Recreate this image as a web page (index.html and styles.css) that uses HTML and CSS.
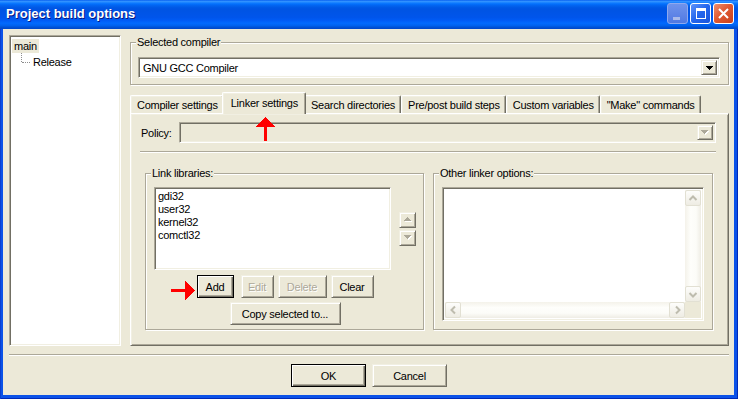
FILE: index.html
```html
<!DOCTYPE html>
<html>
<head>
<meta charset="utf-8">
<title>Project build options</title>
<link rel="stylesheet" href="styles.css">
</head>
<body>
<div class="window">
  <div class="titlebar">
    <span class="title">Project build options</span>
    <div class="caption-buttons">
      <div class="cbtn cbtn-min"><span class="min-bar"></span></div>
      <div class="cbtn cbtn-max">
        <svg width="19" height="19" viewBox="0 0 19 19"><path d="M5 4h10v11H5z M6 7v7h8V7z" fill="#fff" fill-rule="evenodd"/></svg>
      </div>
      <div class="cbtn cbtn-close">
        <svg width="19" height="19" viewBox="0 0 19 19"><path d="M5 5L14 14M14 5L5 14" stroke="#fff" stroke-width="2" fill="none"/></svg>
      </div>
    </div>
  </div>
  <div class="client">
    <div class="main">
      <div class="tree sunken">
        <div class="tree-row"><span class="tree-sel">main</span></div>
        <div class="tree-row tree-child">Release</div>
      </div>
      <div class="right">
        <div class="group group-compiler">
          <span class="group-title">Selected compiler</span>
          <div class="combo sunken">
            <span class="combo-text">GNU GCC Compiler</span>
            <span class="combo-btn raised">
              <svg width="7" height="4" viewBox="0 0 7 4" shape-rendering="crispEdges"><path d="M0 0h7v1H0z M1 1h5v1H1z M2 2h3v1H2z M3 3h1v1H3z" fill="#000"/></svg>
            </span>
          </div>
        </div>
        <div class="tabs">
          <div class="tab">Compiler settings</div>
          <div class="tab tab-active">Linker settings</div>
          <div class="tab">Search directories</div>
          <div class="tab">Pre/post build steps</div>
          <div class="tab">Custom variables</div>
          <div class="tab">"Make" commands</div>
        </div>
        <div class="tab-panel">
          <div class="policy-row">
            <span class="policy-label">Policy:</span>
            <div class="combo combo-disabled sunken">
              <span class="combo-text"></span>
              <span class="combo-btn raised">
                <svg width="8" height="5" viewBox="0 0 8 5" shape-rendering="crispEdges"><path d="M1 1h7v1H1z M2 2h5v1H2z M3 3h3v1H3z M4 4h1v1H4z" fill="#fff"/><path d="M0 0h7v1H0z M1 1h5v1H1z M2 2h3v1H2z M3 3h1v1H3z" fill="#ACA899"/></svg>
              </span>
            </div>
          </div>
          <div class="hsep"></div>
          <div class="groups">
            <div class="group group-libs">
              <span class="group-title">Link libraries:</span>
              <div class="libs-row">
                <div class="listbox sunken">
                  <div class="list-item">gdi32</div>
                  <div class="list-item">user32</div>
                  <div class="list-item">kernel32</div>
                  <div class="list-item">comctl32</div>
                </div>
                <div class="updown">
                  <div class="small-btn raised">
                    <svg width="8" height="5" viewBox="0 0 8 5" shape-rendering="crispEdges"><path d="M4 1h1v1H4z M3 2h3v1H3z M2 3h5v1H2z M1 4h7v1H1z" fill="#fff"/><path d="M3 0h1v1H3z M2 1h3v1H2z M1 2h5v1H1z M0 3h7v1H0z" fill="#ACA899"/></svg>
                  </div>
                  <div class="small-btn raised">
                    <svg width="8" height="5" viewBox="0 0 8 5" shape-rendering="crispEdges"><path d="M1 1h7v1H1z M2 2h5v1H2z M3 3h3v1H3z M4 4h1v1H4z" fill="#fff"/><path d="M0 0h7v1H0z M1 1h5v1H1z M2 2h3v1H2z M3 3h1v1H3z" fill="#ACA899"/></svg>
                  </div>
                </div>
              </div>
              <div class="btn-row">
                <button class="btn btn-default btn-add">Add</button>
                <button class="btn btn-disabled btn-edit">Edit</button>
                <button class="btn btn-disabled btn-delete">Delete</button>
                <button class="btn btn-clear">Clear</button>
              </div>
              <div class="btn-row btn-row-copy">
                <button class="btn btn-copy">Copy selected to...</button>
              </div>
              <svg class="arrow-right" width="24" height="19" viewBox="0 0 24 19" shape-rendering="crispEdges"><rect x="0" y="8" width="15" height="3" fill="#f00"/><polygon points="14,0 24,9.5 14,19" fill="#f00"/></svg>
            </div>
            <div class="group group-other">
              <span class="group-title">Other linker options:</span>
              <div class="textarea sunken">
                <div class="ta-content"></div>
                <div class="vscroll">
                  <div class="sb-btn"><svg width="14" height="13" viewBox="0 0 14 13"><path d="M3.5 8L7 4.5L10.5 8" stroke="#BEBCAE" stroke-width="2" fill="none"/></svg></div>
                  <div class="sb-track"></div>
                  <div class="sb-btn"><svg width="14" height="13" viewBox="0 0 14 13"><path d="M3.5 5L7 8.5L10.5 5" stroke="#BEBCAE" stroke-width="2" fill="none"/></svg></div>
                </div>
                <div class="hscroll">
                  <div class="sb-btn"><svg width="13" height="14" viewBox="0 0 13 14"><path d="M8 3.5L4.5 7L8 10.5" stroke="#BEBCAE" stroke-width="2" fill="none"/></svg></div>
                  <div class="sb-track"></div>
                  <div class="sb-btn"><svg width="13" height="14" viewBox="0 0 13 14"><path d="M5 3.5L8.5 7L5 10.5" stroke="#BEBCAE" stroke-width="2" fill="none"/></svg></div>
                </div>
                <div class="sb-corner"></div>
              </div>
            </div>
          </div>
          <svg class="arrow-up" width="19" height="25" viewBox="0 0 19 25" shape-rendering="crispEdges"><polygon points="9.5,0 19,10 0,10" fill="#f00"/><rect x="8" y="9" width="3" height="15" fill="#f00"/></svg>
        </div>
      </div>
    </div>
    <div class="sep"></div>
    <div class="dialog-buttons">
      <button class="btn btn-default btn-dlg">OK</button>
      <button class="btn btn-dlg">Cancel</button>
    </div>
  </div>
</div>
</body>
</html>
```

FILE: styles.css
```css
* { box-sizing: border-box; }
html, body { margin: 0; padding: 0; }
body {
  width: 738px;
  height: 399px;
  overflow: hidden;
  font-family: "Liberation Sans", Arial, sans-serif;
  font-size: 11px;
  letter-spacing: -0.25px;
  color: #000;
  background: #0A4EE4;
}

.window {
  width: 738px;
  height: 399px;
  display: flex;
  flex-direction: column;
  background: #0B52E8;
  box-shadow: inset 1px 0 #0A3FD0, inset -1px 0 #0029B8, inset 0 -1px #0029B8;
}

/* ---------- title bar ---------- */
.titlebar {
  height: 29px;
  flex: none;
  display: flex;
  align-items: flex-start;
  padding: 0 4px 0 6px;
  background: linear-gradient(to bottom,
    #0058ee 0%, #3593ff 4%, #288eff 7%, #127dff 10%, #036ffc 14%,
    #0262ee 20%, #0057e5 27%, #0054e3 33%, #0055eb 60%, #005bf5 70%,
    #026afe 80%, #0062ef 88%, #0052d6 94%, #0046c8 100%);
}
.title {
  flex: 1;
  color: #fff;
  font-weight: bold;
  font-size: 13px;
  letter-spacing: 0;
  line-height: 16px;
  margin-top: 6px;
  text-shadow: 1px 1px #0A1883;
  white-space: nowrap;
}
.caption-buttons {
  display: flex;
  gap: 2px;
  margin-top: 3px;
}
.cbtn {
  width: 21px;
  height: 21px;
  border-radius: 3px;
  border: 1px solid #fff;
  display: flex;
  align-items: center;
  justify-content: center;
  position: relative;
}
.cbtn-min {
  border-color: #8FA9EE;
  background: linear-gradient(to bottom, #6F93EC, #5179E2);
}
.min-bar {
  position: absolute;
  left: 5px;
  top: 13px;
  width: 7px;
  height: 3px;
  background: #A9BAEA;
}
.cbtn-max {
  background: linear-gradient(135deg, #5D93FA, #2466EC 50%, #1A55DC);
}
.cbtn-close {
  background: linear-gradient(135deg, #EE8F6F, #E05A33 45%, #C9401C);
}

/* ---------- client area ---------- */
.client {
  flex: 1;
  margin: 0 4px 4px 3px;
  background: #ECE9D8;
  padding: 6px 5px 8px 6px;
  display: flex;
  flex-direction: column;
}
.main {
  display: flex;
  gap: 9px;
  height: 311px;
  flex: none;
}

.sunken {
  border: 1px solid;
  border-color: #ACA899 #fff #fff #ACA899;
  box-shadow: inset 1px 1px #716F64, inset -1px -1px #F1EFE2;
}
.raised {
  border: 1px solid;
  border-color: #F1EFE2 #716F64 #716F64 #F1EFE2;
  box-shadow: inset 1px 1px #fff, inset -1px -1px #ACA899;
  background: #ECE9D8;
}

/* tree */
.tree {
  width: 112px;
  flex: none;
  background: #fff;
  padding: 2px 2px;
}
.tree-row {
  height: 16px;
  display: flex;
  align-items: center;
  white-space: nowrap;
}
.tree-sel {
  background: #ECE9D8;
  line-height: 14px;
  padding: 0 2px;
}
.tree-child {
  position: relative;
  padding-left: 21px;
}
.tree-child::before {
  content: "";
  position: absolute;
  left: 9px;
  top: -1px;
  height: 9px;
  border-left: 1px dotted #8E8E8E;
}
.tree-child::after {
  content: "";
  position: absolute;
  left: 10px;
  top: 8px;
  width: 8px;
  border-top: 1px dotted #8E8E8E;
}

/* right column */
.right {
  flex: 1;
  display: flex;
  flex-direction: column;
  min-width: 0;
}

.group {
  position: relative;
  border: 1px solid #ACA899;
  box-shadow: inset 1px 1px #fff, 1px 1px #fff;
}
.group-title {
  position: absolute;
  top: -7px;
  left: 5px;
  padding: 0 1px;
  line-height: 13px;
  background: #ECE9D8;
  white-space: nowrap;
}
.group-compiler {
  margin-top: 7px;
  padding: 14px 8px 6px 7px;
}

.combo {
  height: 21px;
  display: flex;
  align-items: stretch;
  background: #fff;
  padding: 2px;
}
.combo-text {
  flex: 1;
  display: flex;
  align-items: center;
  padding-left: 2px;
  white-space: nowrap;
}
.combo-btn {
  width: 16px;
  flex: none;
  display: flex;
  align-items: center;
  justify-content: center;
}
.combo-disabled {
  background: #ECE9D8;
}

/* tabs */
.tabs {
  display: flex;
  align-items: flex-end;
  height: 21px;
  margin-top: 7px;
  flex: none;
  position: relative;
  z-index: 1;
}
.tab {
  height: 18px;
  padding: 0 5px 0 6px;
  display: flex;
  align-items: center;
  white-space: nowrap;
  background: #ECE9D8;
  border-top: 1px solid #fff;
  border-left: 1px solid #fff;
  border-right: 1px solid #716F64;
  box-shadow: inset -1px 0 #ACA899, inset 1px 1px #F1EFE2;
  border-radius: 2px 2px 0 0;
}
.tab-active {
  height: 22px;
  margin: 0 -2px -1px -2px;
  padding: 0 7px 2px 8px;
  position: relative;
  z-index: 2;
}

.tab-panel {
  flex: 1;
  position: relative;
  border: 1px solid;
  border-color: #fff #716F64 #716F64 #fff;
  box-shadow: inset 1px 1px #F1EFE2, inset -1px -1px #ACA899;
  padding: 8px 12px 0 10px;
}
.policy-row {
  display: flex;
  align-items: center;
}
.policy-label {
  flex: 0 0 38px;
}
.policy-row .combo {
  flex: 1;
}
.hsep {
  margin-top: 8px;
  height: 2px;
  border-top: 1px solid #ACA899;
  border-bottom: 1px solid #fff;
  margin-left: -1px;
}
.groups {
  display: flex;
  gap: 9px;
  margin: 20px 3px 0 4px;
}
.group-libs, .group-other {
  flex: 1;
}
.group-libs {
  padding: 13px 7px 4px 8px;
}
.group-other {
  padding: 13px 8px 0 8px;
}

.libs-row {
  display: flex;
  align-items: center;
  gap: 8px;
}
.listbox {
  flex: 1;
  height: 83px;
  background: #fff;
  padding: 2px 3px;
}
.list-item {
  line-height: 13px;
  white-space: nowrap;
}
.updown {
  display: flex;
  flex-direction: column;
  gap: 2px;
}
.small-btn {
  width: 17px;
  height: 16px;
  display: flex;
  align-items: center;
  justify-content: center;
}

.btn-row {
  display: flex;
  justify-content: center;
  gap: 4px;
  margin-top: 5px;
}
.btn-row-copy {
  margin-top: 4px;
}
.btn {
  height: 23px;
  padding: 0;
  margin: 0;
  font: inherit;
  letter-spacing: inherit;
  color: #000;
  background: #ECE9D8;
  border: 1px solid;
  border-color: #F1EFE2 #716F64 #716F64 #F1EFE2;
  box-shadow: inset 1px 1px #fff, inset -1px -1px #ACA899;
  display: flex;
  align-items: center;
  justify-content: center;
  white-space: nowrap;
}
.btn-default {
  border-color: #000;
  box-shadow: inset 1px 1px #fff, inset -1px -1px #716F64, inset -2px -2px #ACA899;
}
.btn-disabled {
  color: #ACA899;
  text-shadow: 1px 1px #fff;
}
.btn-add { width: 37px; margin-right: 3px; }
.btn-edit { width: 33px; }
.btn-delete { width: 49px; }
.btn-clear { width: 43px; }
.btn-copy { width: 111px; }

.arrow-right {
  position: absolute;
  left: 25px;
  top: 107px;
}
.arrow-up {
  position: absolute;
  left: 125px;
  top: 3px;
}

/* textarea with disabled scrollbars */
.textarea {
  height: 134px;
  background: #fff;
  padding: 2px;
  display: grid;
  grid-template-columns: 1fr 16px;
  grid-template-rows: 1fr 16px;
}
.vscroll {
  display: flex;
  flex-direction: column;
  background: linear-gradient(to right, #F4F2EA, #FEFEFB 35%, #FCFCF8 70%, #EFEDE5);
}
.hscroll {
  display: flex;
  background: linear-gradient(to bottom, #F4F2EA, #FEFEFB 35%, #FCFCF8 70%, #EFEDE5);
}
.sb-track { flex: 1; }
.sb-btn {
  width: 16px;
  height: 16px;
  flex: none;
  border: 1px solid #E2E0D3;
  border-radius: 2px;
  background: linear-gradient(to bottom, #FDFDFB, #EEECE3);
  display: flex;
  align-items: center;
  justify-content: center;
}
.sb-corner {
  background: #ECE9D8;
}

/* bottom */
.sep {
  margin-top: 8px;
  height: 2px;
  flex: none;
  border-top: 1px solid #ACA899;
  border-bottom: 1px solid #fff;
}
.dialog-buttons {
  margin-top: 8px;
  display: flex;
  justify-content: center;
  gap: 6px;
}
.btn-dlg { width: 75px; }
```
